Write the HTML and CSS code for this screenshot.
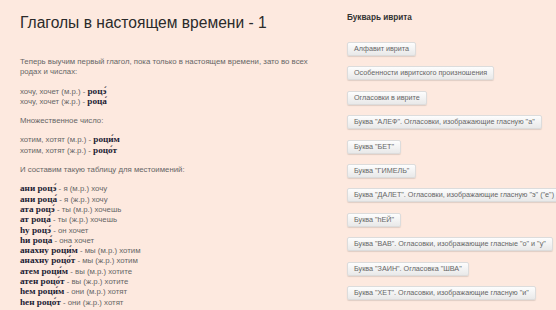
FILE: index.html
```html
<!DOCTYPE html>
<html lang="ru">
<head>
  <meta charset="UTF-8" />
  <title>Глаголы в настоящем времени - 1</title>
  <link rel="stylesheet" href="styles.css">
</head>
<body>
  <div class="page">
    <div class="content">
      <h1>Глаголы в настоящем времени - 1</h1>

      <p>Теперь выучим первый глагол, пока только в настоящем времени, зато во всех родах и числах:</p>

      <p>хочу, хочет (м.р.) - <b>роцэ́</b><br>
      хочу, хочет (ж.р.) - <b>роца́</b></p>

      <p>Множественное число:</p>

      <p>хотим, хотят (м.р.) - <b>роци́м</b><br>
      хотим, хотят (ж.р.) - <b>роцо́т</b></p>

      <p>И составим такую таблицу для местоимений:</p>

      <p><b>ани роцэ́</b> - я (м.р.) хочу<br>
      <b>ани роца́</b> - я (ж.р.) хочу<br>
      <b>ата роцэ́</b> - ты (м.р.) хочешь<br>
      <b>ат роца́</b> - ты (ж.р.) хочешь<br>
      <b>hу роцэ́</b> - он хочет<br>
      <b>hи роца́</b> - она хочет<br>
      <b>анахну роци́м</b> - мы (м.р.) хотим<br>
      <b>анахну роцо́т</b> - мы (ж.р.) хотим<br>
      <b>атем роци́м</b> - вы (м.р.) хотите<br>
      <b>атен роцо́т</b> - вы (ж.р.) хотите<br>
      <b>hем роци́м</b> - они (м.р.) хотят<br>
      <b>hен роцо́т</b> - они (ж.р.) хотят</p>
    </div>

    <div class="sidebar">
      <h3>Букварь иврита</h3>
      <div class="links">
        <button class="link-btn">Алфавит иврита</button>
        <button class="link-btn">Особенности ивритского произношения</button>
        <button class="link-btn">Огласовки в иврите</button>
        <button class="link-btn">Буква "АЛЕФ". Огласовки, изображающие гласную "а"</button>
        <button class="link-btn">Буква "БЕТ"</button>
        <button class="link-btn">Буква "ГИМЕЛЬ"</button>
        <button class="link-btn">Буква "ДАЛЕТ". Огласовки, изображающие гласную "э" ("е")</button>
        <button class="link-btn">Буква "hЕЙ"</button>
        <button class="link-btn">Буква "ВАВ". Огласовки, изображающие гласные "о" и "у"</button>
        <button class="link-btn">Буква "ЗАИН". Огласовка "ШВА"</button>
        <button class="link-btn">Буква "ХЕТ". Огласовки, изображающие гласную "и"</button>
      </div>
    </div>
  </div>
</body>
</html>
```

FILE: styles.css
```css
body {
  margin: 0;
  background: #fde9df;
  font-family: "Liberation Sans", Arial, sans-serif;
  color: #666;
}

.page {
  display: flex;
  height: 310px;
  overflow: hidden;
}

.content {
  width: 327px;
  flex-shrink: 0;
  padding-left: 20px;
  box-sizing: border-box;
}

.content h1 {
  font-size: 15.6px;
  font-weight: normal;
  color: #2a2a2a;
  margin: 13px 0 24px;
  line-height: 20px;
  white-space: nowrap;
}

.content p {
  font-size: 7.8px;
  line-height: 10.3px;
  margin: 0 0 9px;
  width: 300px;
}

.content b {
  font-family: "Liberation Serif", "Times New Roman", serif;
  font-size: 9.2px;
  line-height: 8px;
  color: #1c1c34;
}

.sidebar {
  padding-left: 20px;
  padding-top: 13px;
}

.sidebar h3 {
  font-size: 8.2px;
  color: #333;
  margin: 0 0 19px;
  line-height: 10px;
}

.links {
  display: flex;
  flex-direction: column;
  align-items: flex-start;
  gap: 10.4px;
}

.link-btn {
  height: 14px;
  padding: 0 6px;
  font-family: "Liberation Sans", Arial, sans-serif;
  font-size: 7.2px;
  color: #666;
  background: linear-gradient(#fdfdfd, #e9e9e9);
  border: 1px solid #dcdcdc;
  border-radius: 2px;
  box-shadow: 0 1px 1px rgba(0, 0, 0, 0.12);
  white-space: nowrap;
  line-height: 12px;
}
```
